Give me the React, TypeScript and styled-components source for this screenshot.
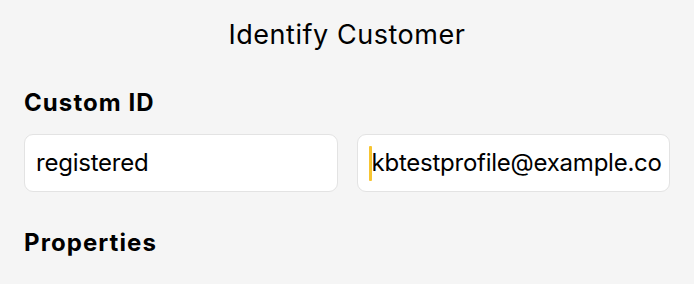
import React from 'react';
import styled, {createGlobalStyle} from "styled-components";

const GlobalStyle = createGlobalStyle`
    html, body {
        margin: 0;
        padding: 0;
        background: #f5f5f5;
    }
    body {
        font-family: "Inter", "Noto Sans", sans-serif;
        color: #000;
    }
`

// second value is scrolled in the field, only this much is visible
const fields = [
    {value: "registered", focused: false},
    {value: "kbtestprofile@example.co", focused: true},
]

export default function App() {
    return (
        <>
            <GlobalStyle/>
            <Screen>
                <Title>Identify Customer</Title>
                <Section $gap={38}>
                    <SectionTitle>Custom ID</SectionTitle>
                    <FieldRow>
                        {fields.map((f) => (
                            <Field key={f.value}>
                                {f.focused && <Caret/>}
                                <FieldText>{f.value}</FieldText>
                            </Field>
                        ))}
                    </FieldRow>
                </Section>
                <Section $gap={37}>
                    <SectionTitle>Properties</SectionTitle>
                </Section>
            </Screen>
        </>
    );
}

const Screen = styled.div`
    width: 694px;
    height: 284px;
    overflow: hidden;
    background: #f5f5f5;
    padding: 0 24px;
    box-sizing: border-box;
`

const Title = styled.h1`
    margin: 0;
    padding-top: 19px;
    text-align: center;
    font-size: 27px;
    font-weight: 400;
    line-height: 32px;
    letter-spacing: 0.02em;
`

const Section = styled.section<{ $gap: number }>`
    padding-top: ${p => p.$gap}px;
`

const SectionTitle = styled.h2`
    margin: 0;
    font-size: 24px;
    font-weight: 700;
    line-height: 28px;
    letter-spacing: 0.045em;
`

const FieldRow = styled.div`
    display: grid;
    grid-template-columns: 1fr 1fr;
    gap: 19px;
    margin-top: 17px;
`

const Field = styled.div`
    height: 58px;
    box-sizing: border-box;
    background: #fff;
    border: 1px solid #e3e3e3;
    border-radius: 9px;
    padding: 0 4px 0 11px;
    display: flex;
    align-items: center;
    overflow: hidden;
`

const FieldText = styled.span`
    font-size: 24px;
    line-height: 28px;
    white-space: nowrap;
    letter-spacing: -0.01em;
`

const Caret = styled.span`
    flex: none;
    width: 3px;
    height: 35px;
    background: #f7c531;
    border-radius: 1px;
`
